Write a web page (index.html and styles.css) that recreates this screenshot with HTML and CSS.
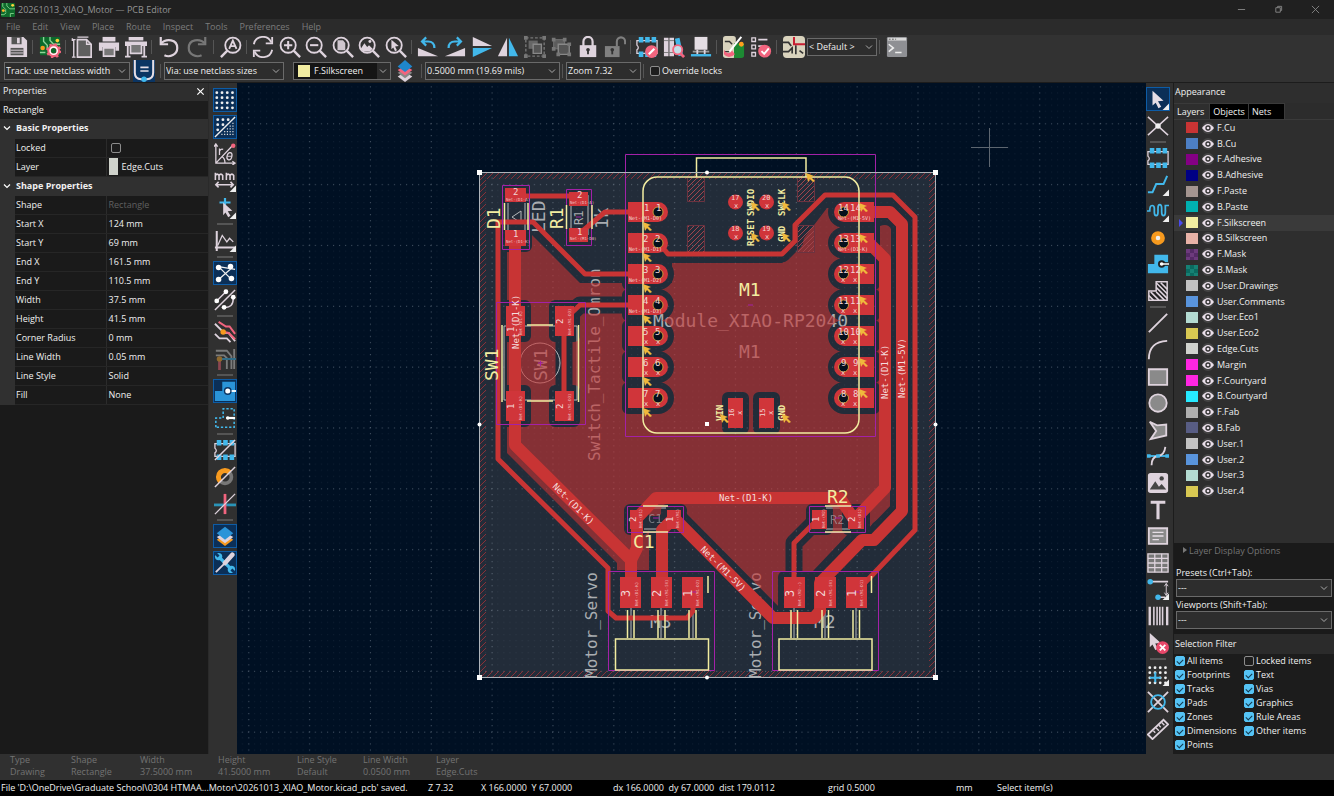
FILE: index.html
```html
<!DOCTYPE html>
<html lang="en">
<head>
<meta charset="utf-8">
<title>20261013_XIAO_Motor — PCB Editor</title>
<link rel="stylesheet" href="styles.css">
</head>
<body>
<svg class="defs" aria-hidden="true">
<defs>
<symbol id="i-logo" viewBox="0 0 24 24"><rect width="24" height="24" rx="2" fill="#0f6b2c"/><path d="M3 0v6l5 5v5M10 0v5l5 5h9M0 20h5l4-3M16 24v-6h6" fill="none" stroke="#7fd08a" stroke-width="1.6"/><circle cx="20" cy="4" r="2.5" fill="#ffd23c"/><circle cx="4" cy="13" r="2.5" fill="#ffb02c"/></symbol>
<symbol id="i-save" viewBox="0 0 24 24"><path d="M1 1h18l4 4v18H1z" fill="#ded3dd"/><path d="M6 1h11v8H6z" fill="#555"/><path d="M12 2h3v6h-3z" fill="#ded3dd"/><path d="M5 13h14v8H5z" fill="#555"/><path d="M5 15.500h14M5 18.500h14" stroke="#ded3dd"/></symbol>
<symbol id="i-setup" viewBox="0 0 24 24"><rect x="1" y="1" width="22" height="20" rx="1" fill="#0c6a2b"/><path d="M5 1v5l4 4v4M12 1v4l4 4h7M1 18h6" fill="none" stroke="#8fd49a" stroke-width="1.500"/><circle cx="20" cy="5" r="2" fill="#ffcf3c"/><circle cx="4" cy="13" r="2.500" fill="#f79a1e"/><circle cx="16" cy="16" r="5" fill="none" stroke="#f2647e" stroke-width="4"/><circle cx="16" cy="16" r="7" fill="none" stroke="#f2647e" stroke-width="2.500" stroke-dasharray="2.500 3"/><circle cx="16" cy="16" r="4" fill="none" stroke="#fff" stroke-width="1.500"/></symbol>
<symbol id="i-page" viewBox="0 0 24 24"><path d="M7 4h10l5 5v14H7z" fill="#5f5f5f" stroke="#ded3dd" stroke-width="1.800"/><path d="M17 4v5h5M7 1.200h12M3 4v19M1.500 2.500v3M1 4h4M1 23h4" fill="none" stroke="#ded3dd" stroke-width="1.500"/></symbol>
<symbol id="i-print" viewBox="0 0 24 24"><path d="M5 1h14v5H5z" fill="#ded3dd"/><path d="M1 7h22v9h-4v-4H5v4H1z" fill="#ded3dd"/><path d="M6 13h12v9H6z" fill="#777" stroke="#ded3dd" stroke-width="1.800"/></symbol>
<symbol id="i-plot" viewBox="0 0 24 24"><path d="M4 1h16v4H4zM0 6h24v5H0z" fill="#ded3dd"/><path d="M6 9h12v10H6z" fill="#777" stroke="#ded3dd" stroke-width="1.800"/><path d="M3 10v12M21 10v12M0 22.500h6M18 22.500h6" stroke="#ded3dd" stroke-width="2"/></symbol>
<symbol id="i-undo" viewBox="0 0 24 24"><path d="M3 8.500C9 2 21 3.500 21 13c0 7-8 11-14 8" fill="none" stroke="#ded3dd" stroke-width="2.400"/><path d="M3 1v8h8" fill="none" stroke="#ded3dd" stroke-width="2.400"/></symbol>
<symbol id="i-redo" viewBox="0 0 24 24"><path d="M21 8.500C15 2 3 3.500 3 13c0 7 8 11 14 8" fill="none" stroke="#777" stroke-width="2.400"/><path d="M21 1v8h-8" fill="none" stroke="#777" stroke-width="2.400"/></symbol>
<symbol id="i-lens" viewBox="0 0 24 24"><circle cx="10" cy="10" r="8.300" fill="none" stroke="#ded3dd" stroke-width="2"/><path d="m16 16 7 7" stroke="#ded3dd" stroke-width="2.600"/></symbol>
<symbol id="i-find" viewBox="0 0 24 24"><circle cx="14" cy="10" r="8.300" fill="none" stroke="#ded3dd" stroke-width="2"/><path d="m8 16-7 7" stroke="#ded3dd" stroke-width="2.600"/><path d="m10 14 4-9 4 9M11.500 11h5" fill="none" stroke="#ded3dd" stroke-width="2"/></symbol>
<symbol id="i-refresh" viewBox="0 0 24 24"><path d="M2 9a10 10 0 0 1 19-2M22 15a10 10 0 0 1-19 2" fill="none" stroke="#ded3dd" stroke-width="2"/><path d="M22 1v7h-7M2 23v-7h7" fill="none" stroke="#ded3dd" stroke-width="2"/></symbol>
<symbol id="i-zin" viewBox="0 0 24 24"><use href="#i-lens"/><path d="M5.500 10h9M10 5.500v9" stroke="#ded3dd" stroke-width="2.200"/></symbol>
<symbol id="i-zout" viewBox="0 0 24 24"><use href="#i-lens"/><path d="M5.500 10h9" stroke="#ded3dd" stroke-width="2.200"/></symbol>
<symbol id="i-zfit" viewBox="0 0 24 24"><use href="#i-lens"/><path d="M6 4.500h6l2.500 3v8H6z" fill="#cfc6ce"/></symbol>
<symbol id="i-zobj" viewBox="0 0 24 24"><use href="#i-lens"/><path d="m3 14 4-6 3 4 2-2 4 4-3 3H6z" fill="#ded3dd"/><circle cx="13" cy="6" r="1.600" fill="#ded3dd"/></symbol>
<symbol id="i-zsel" viewBox="0 0 24 24"><use href="#i-lens"/><path d="m7 4 8 7-4 .5 2 4-2 1-2-4-2 2z" fill="#ded3dd"/></symbol>
<symbol id="i-ccw" viewBox="0 0 24 24"><path d="M1 13v9h22z" fill="#ded3dd"/><path d="M6 6h6q7 0 7 7M10 1.500 5.500 6l4.500 4.500" fill="none" stroke="#42b8eb" stroke-width="2.400"/></symbol>
<symbol id="i-cw" viewBox="0 0 24 24"><path d="M23 13v9H1z" fill="#ded3dd"/><path d="M18 6h-6q-7 0-7 7M14 1.500 18.500 6 14 10.500" fill="none" stroke="#42b8eb" stroke-width="2.400"/></symbol>
<symbol id="i-flipv" viewBox="0 0 24 24"><path d="M2 1v10h21z" fill="#ded3dd"/><path d="M2 23V13h21z" fill="#42b8eb"/></symbol>
<symbol id="i-fliph" viewBox="0 0 24 24"><path d="M11 2v20H1z" fill="#ded3dd"/><path d="M13 2v20h10z" fill="#42b8eb"/></symbol>
<symbol id="i-group" viewBox="0 0 24 24"><rect x="2" y="2" width="20" height="20" fill="none" stroke="#777" stroke-width="1.500" stroke-dasharray="3 2"/><path d="M0 0h4v4H0zM20 0h4v4h-4zM0 20h4v4H0zM20 20h4v4h-4z" fill="#777"/><path d="M5 5h10v9H5z" fill="#666"/><path d="M10 9h9v10h-9z" fill="#555" stroke="#888" stroke-width="1.500"/></symbol>
<symbol id="i-ungroup" viewBox="0 0 24 24"><path d="M4 4h12v10H4z" fill="#5c5c5c" stroke="#777"/><path d="M9 9h12v11H9z" fill="#555" stroke="#888" stroke-width="1.500"/><path d="M2 2h4v4H2zM14 2h4v4h-4zM2 12h4v4H2zM19 7h4v4h-4zM7 18h4v4H7zM19 18h4v4h-4z" fill="#777"/></symbol>
<symbol id="i-lock" viewBox="0 0 24 24"><path d="M3 10h18v13H3z" fill="#ded3dd"/><path d="M7 11V6a5 5 0 0 1 10 0v5" fill="none" stroke="#ded3dd" stroke-width="2.400"/><circle cx="12" cy="15" r="2" fill="#333"/><path d="M12 15v5" stroke="#333" stroke-width="2"/></symbol>
<symbol id="i-unlock" viewBox="0 0 24 24"><path d="M1 11h16v12H1z" fill="#808080"/><path d="M14 11V6a4.500 4.500 0 0 1 9 0v3" fill="none" stroke="#808080" stroke-width="2.200"/><circle cx="9" cy="15" r="2" fill="#333"/><path d="M9 15v5" stroke="#333" stroke-width="2"/></symbol>
<symbol id="i-fp" viewBox="0 0 24 24"><path d="M1 5h22v14H1v-4q3-2 0-5z" fill="none" stroke="#ded3dd" stroke-width="1.400"/><path d="M3 1h5v6H3zM10 1h5v6h-5zM17 1h5v6h-5zM3 17h5v6H3zM10 17h5v6h-5zM17 17h5v6h-5z" fill="#42b8eb"/></symbol>
<symbol id="i-fpedit" viewBox="0 0 24 24"><use href="#i-fp"/><circle cx="17" cy="17" r="7" fill="#f2647e"/><path d="m14 20 6-6" stroke="#fff" stroke-width="2.400"/></symbol>
<symbol id="i-lib" viewBox="0 0 24 24"><path d="M1 2h5v20H1zM7 2h5v20H7z" fill="#ded3dd"/><path d="M1 5h11M1 18h11" stroke="#777"/><path d="m13 3 5-1 4 19-5 1z" fill="#42b8eb"/><circle cx="16" cy="15" r="5" fill="#c5dfe8" stroke="#f2647e" stroke-width="2"/><path d="m19 19 4 4" stroke="#f2647e" stroke-width="3"/></symbol>
<symbol id="i-update" viewBox="0 0 24 24"><path d="M5 1h14v14H5z" fill="#e4dde3"/><path d="M3 16h18v2H3z" fill="#999"/><path d="M8 15v5M16 15v5" stroke="#ded3dd" stroke-width="2"/><path d="M1 21h22" stroke="#42b8eb" stroke-width="2.600"/></symbol>
<symbol id="i-sch" viewBox="0 0 24 24"><rect width="14" height="24" rx="3" fill="#d9d3bd"/><path d="M12 8h11v13a3 3 0 0 1-3 3h-8z" fill="#1d8a33"/><path d="M2 6h5l3 3M2 17h5" stroke="#333" fill="none" stroke-width="1.500"/><circle cx="20" cy="9" r="2.600" fill="#ff9d1e"/><path d="M20 1 7 17" stroke="#fff" stroke-width="2.200"/><path d="M1 15q4 7 9 1l3 4q-7 6-12 0z" fill="#f2647e"/></symbol>
<symbol id="i-drc" viewBox="0 0 24 24"><path d="M2 2h4v4H2zM2 10h4v4H2zM2 18h4v4H2z" fill="none" stroke="#ded3dd" stroke-width="1.400"/><path d="M9 4h10M9 11h6" stroke="#ded3dd" stroke-width="2"/><circle cx="16" cy="16.500" r="7" fill="#f2647e"/><path d="m12.500 16.500 3 3 5-6" fill="none" stroke="#fff" stroke-width="2"/></symbol>
<symbol id="i-eesch" viewBox="0 0 24 24"><rect width="24" height="24" rx="4" fill="#d9d3bd"/><path d="M0 7h6l3 4M0 17h6l4-4v6M10 12v4M18 16l4 3M14 10v10" fill="none" stroke="#333" stroke-width="1.800"/><path d="M12 1v8h12" fill="none" stroke="#c81e32" stroke-width="2.200"/></symbol>
<symbol id="i-term" viewBox="0 0 24 24"><rect x="1" y="1" width="22" height="22" rx="1.500" fill="#8f9094"/><path d="M2 2h20v3H2z" fill="#d8d8d8"/><path d="M3 3.500h8" stroke="#555" stroke-dasharray="2 1.500"/><path d="m3 9 5 4-5 4M10 18h7" fill="none" stroke="#eee" stroke-width="1.700"/></symbol>
<symbol id="i-track" viewBox="0 0 24 24"><path d="M0 0h24v24H0z" fill="#0b3563"/><path d="M2 0v14q0 7 7 7h6q7 0 7-7V0" fill="none" stroke="#e6dee6" stroke-width="2.200"/><path d="M8 8h9M8 12h9" stroke="#e6dee6" stroke-width="1.800"/><circle cx="12" cy="21" r="3" fill="#42b8eb"/></symbol>
<symbol id="i-layers" viewBox="0 0 24 24"><path d="m12 13 8 5-8 6-8-6z" fill="#ded3dd"/><path d="m12 10 8 4-8 6-8-6z" fill="#888"/><path d="m12 6 8 5-8 6-8-6z" fill="#f2647e"/><path d="m12 0 8 7-8 6-8-6z" fill="#1f86cc"/></symbol>
<symbol id="c-corner" viewBox="0 0 24 24"><path d="M24 17v7h-7z" fill="#eee"/></symbol>
<symbol id="i-grid" viewBox="0 0 24 24"><path d="M3 4h20M3 9.500h20M3 15h20M3 20.500h20" stroke="#eee" stroke-width="3" stroke-dasharray="0.100 5.600" stroke-linecap="round"/></symbol>
<symbol id="i-grid2" viewBox="0 0 24 24"><path d="M4 4h14M4 9.500h8M4 15h3" stroke="#eee" stroke-width="3" stroke-dasharray="0.100 5.600" stroke-linecap="round"/><path d="M1 23 23 1" stroke="#eee" stroke-width="1.500"/><path d="M20 8h3M17 11h6M14 14h9M11 17h12M8 20h15" stroke="#ddd" stroke-width="1.300" stroke-dasharray="1.300 1.700"/></symbol>
<symbol id="i-polar" viewBox="0 0 24 24"><path d="M2 1v21h21M2 22 20 3M0 4l2-3 2 3M20 20l3 2-3 2M12 22q0-5-3-7" fill="none" stroke="#ded3dd" stroke-width="1.400"/><circle cx="21" cy="3" r="2.400" fill="#f2647e"/><path d="M6 13V6m0 3q1-3 4-2" fill="none" stroke="#ded3dd" stroke-width="1.400"/><ellipse cx="17" cy="14.500" rx="2.600" ry="4" transform="rotate(15 17 14)" fill="none" stroke="#ded3dd" stroke-width="1.400"/><path d="M14.500 14.500h5" stroke="#ded3dd"/></symbol>
<symbol id="i-mm" viewBox="0 0 24 24"><path d="M1.500 11V3m0 3q2-3 4 0v5m0-5q2-3 4 0v5M13.500 11V3m0 3q2-3 4 0v5m0-5q2-3 4 0v5" fill="none" stroke="#ded3dd" stroke-width="1.700"/><path d="M2 16h19M5 13l-3 3 3 3M18 13l3 3-3 3" fill="none" stroke="#ded3dd" stroke-width="1.700"/><use href="#c-corner"/></symbol>
<symbol id="i-cursor" viewBox="0 0 24 24"><path d="M12 1v10M6 6h12" stroke="#42b8eb" stroke-width="2.400"/><path d="m10 6 10 9-5 .5 3 5-2.500 1.500-3-5-2.500 3z" fill="#ded3dd"/><use href="#c-corner"/></symbol>
<symbol id="i-axes" viewBox="0 0 24 24"><path d="M3 1v22M1 19h22" fill="none" stroke="#ded3dd" stroke-width="2.200"/><path d="m4 17 5-11 5 7 3-4 4 4" fill="none" stroke="#ded3dd" stroke-width="1.400"/><use href="#c-corner"/></symbol>
<symbol id="i-rats" viewBox="0 0 24 24"><path d="m5 5 14 14M5 19 20 6M5 5l18 3" stroke="#eee" stroke-width="1.400"/><g fill="#fff"><circle cx="5" cy="6" r="3"/><circle cx="18" cy="5" r="3"/><circle cx="5" cy="19" r="3"/><circle cx="19" cy="18" r="3"/></g></symbol>
<symbol id="i-rats2" viewBox="0 0 24 24"><path d="m2 14 11-11M1 23 23 1M11 20q10 1 10-10" fill="none" stroke="#ded3dd" stroke-width="1.600"/><g fill="#fff"><circle cx="3" cy="13" r="2.600"/><circle cx="13" cy="3" r="2.600"/><circle cx="11" cy="20" r="2.600"/><circle cx="21" cy="9" r="2.600"/></g></symbol>
<symbol id="i-diff" viewBox="0 0 24 24"><path d="m1 3 10 10h5l7 9M1 14l5 5h8l4 4" fill="none" stroke="#ded3dd" stroke-width="2"/><path d="m5 1 8 5h4l6 8M11 12l5 1 7 7" fill="none" stroke="#f2647e" stroke-width="2.200"/><circle cx="10" cy="12" r="3" fill="#f79a1e"/></symbol>
<symbol id="i-dim" viewBox="0 0 24 24"><path d="M2 3h12l5 6v14M2 8h9l3 3v12M22 1v22" fill="none" stroke="#7b7b7b" stroke-width="2"/><path d="M6 12v12" stroke="#8c4650" stroke-width="3"/><path d="M6 12h18" stroke="#316d88" stroke-width="2.200"/><circle cx="6" cy="12" r="3" fill="#8f6a2f"/></symbol>
<symbol id="i-zone" viewBox="0 0 24 24"><path d="M1 23V12h8V2h14v21z" fill="#2a94d8"/><path d="M14 12h10" stroke="#fff" stroke-width="2"/><circle cx="15" cy="12" r="3.500" fill="#fff" stroke="#0b3563" stroke-width="1.500"/></symbol>
<symbol id="i-zone2" viewBox="0 0 24 24"><path d="M2 22V12h8V2h12v20z" fill="none" stroke="#42b8eb" stroke-width="1.700" stroke-dasharray="2.500 2"/><path d="M14 12h9" stroke="#fff" stroke-width="2.400"/><circle cx="15" cy="12" r="2" fill="#fff"/></symbol>
<symbol id="i-fpo" viewBox="0 0 24 24"><use href="#i-fp"/><path d="M1 23 23 1" stroke="#ded3dd" stroke-width="1.600"/></symbol>
<symbol id="i-via" viewBox="0 0 24 24"><circle cx="12" cy="12" r="7" fill="none" stroke="#777" stroke-width="4"/><path d="M5 19A9.500 9.500 0 1 1 19 5l-4 4a4 4 0 0 0-6 6z" fill="#f79a1e"/><path d="M1 23 23 1" stroke="#ded3dd" stroke-width="1.600"/></symbol>
<symbol id="i-trk" viewBox="0 0 24 24"><path d="M0 13h24" stroke="#2a94b8" stroke-width="3"/><path d="M12 1v22" stroke="#f2647e" stroke-width="3"/><path d="M1 23 23 1" stroke="#ded3dd" stroke-width="1.400"/></symbol>
<symbol id="i-stack" viewBox="0 0 24 24"><path d="m12 10 9 6-9 7-9-7z" fill="#f79a1e"/><path d="m12 8 9 5-9 7-9-7z" fill="#ded3dd"/><path d="m12 2 9 7-9 7-9-7z" fill="#2a94d8"/></symbol>
<symbol id="i-tools" viewBox="0 0 24 24"><path d="m5 5 14 14" stroke="#42b8eb" stroke-width="3.500"/><circle cx="5" cy="5" r="4" fill="#42b8eb"/><circle cx="19" cy="19" r="4" fill="#42b8eb"/><path d="m0 0 5 5M24 24l-5-5" stroke="#0b3563" stroke-width="3"/><path d="M2 22 13 11" stroke="#ded3dd" stroke-width="2"/><path d="m12 12 8-9" stroke="#ded3dd" stroke-width="5" stroke-linecap="round"/></symbol>
<symbol id="i-arrow" viewBox="0 0 24 24"><path d="m6 3 12 11-6 .5 3.500 6-3 1.500-3-6L6 19z" fill="#e6dee6"/><use href="#c-corner"/></symbol>
<symbol id="i-netx" viewBox="0 0 24 24"><path d="m1 2 22 20M1 22 23 2" stroke="#ded3dd" stroke-width="1.600"/><circle cx="12" cy="12" r="3" fill="#eee"/></symbol>
<symbol id="i-route" viewBox="0 0 24 24"><path d="M1 20h5l4-9h8l4-9" fill="none" stroke="#42b8eb" stroke-width="2.200"/><use href="#c-corner"/></symbol>
<symbol id="i-tune" viewBox="0 0 24 24"><path d="M0 12h3q0-6 2.500-6T8 9v4q0 4 2 4t2-4V9q0-4 2-4t2 4v4q0 4 2 4t2-4V6h4" fill="none" stroke="#42b8eb" stroke-width="1.900"/><use href="#c-corner"/></symbol>
<symbol id="i-viaadd" viewBox="0 0 24 24"><circle cx="12" cy="12" r="5" fill="#eee" stroke="#f79a1e" stroke-width="5"/></symbol>
<symbol id="i-zoneadd" viewBox="0 0 24 24"><path d="M1 22V12h7V2h15v20z" fill="#42b8eb"/><path d="M15 12h8" stroke="#222" stroke-width="4"/><circle cx="16" cy="12" r="4" fill="#222"/><path d="M15 12h9" stroke="#fff" stroke-width="1.600"/><circle cx="16" cy="12" r="2" fill="#fff"/></symbol>
<symbol id="i-rule" viewBox="0 0 24 24"><path d="M2 22V12h8V2h12v20z" fill="#222" stroke="#ded3dd" stroke-width="1.600"/><path d="m10 3 12 12M10 8l12 12M10 13l9 9M4 13l9 9M2 17l5 5M15 3l7 7" stroke="#ded3dd" stroke-width="1.700"/></symbol>
<symbol id="i-line" viewBox="0 0 24 24"><path d="M2 22 22 2" stroke="#ded3dd" stroke-width="2"/></symbol>
<symbol id="i-arc" viewBox="0 0 24 24"><path d="M2 22Q2 3 22 2" fill="none" stroke="#ded3dd" stroke-width="2"/></symbol>
<symbol id="i-rect" viewBox="0 0 24 24"><path d="M2 3.500h20v17H2z" fill="#8a8a8a" stroke="#ded3dd" stroke-width="2"/></symbol>
<symbol id="i-circ" viewBox="0 0 24 24"><circle cx="12" cy="12" r="9.500" fill="#8a8a8a" stroke="#ded3dd" stroke-width="2"/></symbol>
<symbol id="i-poly" viewBox="0 0 24 24"><path d="m3 3 8 4 10-1v12L4 22l6-9z" fill="#8a8a8a" stroke="#ded3dd" stroke-width="2"/></symbol>
<symbol id="i-bez" viewBox="0 0 24 24"><path d="M1 12h22" stroke="#42b8eb" stroke-width="2"/><path d="M5 22q0-9 7-10t8-10" fill="none" stroke="#ded3dd" stroke-width="2"/><path d="M0 10h4v4H0zM10 10h4v4h-4zM20 10h4v4h-4z" fill="#42b8eb"/></symbol>
<symbol id="i-img" viewBox="0 0 24 24"><rect x="1" y="1" width="22" height="22" rx="3" fill="#ded3dd"/><path d="m3 19 6-9 4 6 3-3 5 6z" fill="#444"/><circle cx="16" cy="7" r="2.400" fill="#444"/></symbol>
<symbol id="i-text" viewBox="0 0 24 24"><path d="M4 3.500h16M12 3v19" stroke="#ded3dd" stroke-width="3.400"/></symbol>
<symbol id="i-tbox" viewBox="0 0 24 24"><path d="M2 3.500h20v17H2z" fill="#8a8a8a" stroke="#ded3dd" stroke-width="2"/><path d="M6 8h12M6 12h12M6 16h7" stroke="#e6dee6" stroke-width="1.500"/></symbol>
<symbol id="i-table" viewBox="0 0 24 24"><path d="M1 2h22v20H1z" fill="#777" stroke="#ded3dd" stroke-width="1.500"/><path d="M1 7h22M1 12h22M1 17h22M8.500 2v20M16 2v20" stroke="#ded3dd" stroke-width="1.400"/></symbol>
<symbol id="i-dima" viewBox="0 0 24 24"><path d="M3 4h20M12 21h8" stroke="#ded3dd" stroke-width="1.800"/><path d="M21 6v13M19 9l2-3 2 3M19 16l2 3 2-3" fill="none" stroke="#ded3dd"/><circle cx="3.500" cy="4" r="3" fill="#42b8eb"/><circle cx="12" cy="21" r="3" fill="#42b8eb"/><use href="#c-corner"/></symbol>
<symbol id="i-bar" viewBox="0 0 24 24"><path d="M3 2v20M22 2v20" stroke="#ded3dd" stroke-width="2.600"/><path d="M7.500 2v20M11 2v20M17 2v20M14 2v20" stroke="#ded3dd" stroke-width="1.700"/></symbol>
<symbol id="i-del" viewBox="0 0 24 24"><path d="m3 1 12 11-6 .5 3 6-3 1-3-6-3 3z" fill="#ded3dd"/><circle cx="17" cy="17" r="7" fill="#e8486a"/><path d="m14 14 6 6M14 20l6-6" stroke="#fff" stroke-width="2"/></symbol>
<symbol id="i-gorig" viewBox="0 0 24 24"><use href="#i-grid"/><path d="M9 9v11M3 15h12" stroke="#42b8eb" stroke-width="2.200"/><use href="#c-corner"/></symbol>
<symbol id="i-snap" viewBox="0 0 24 24"><path d="m1 1 22 22M1 23 23 1" stroke="#ded3dd" stroke-width="2"/><circle cx="12" cy="12" r="7.500" fill="none" stroke="#42b8eb" stroke-width="2"/></symbol>
<symbol id="i-ruler" viewBox="0 0 24 24"><path d="m1 18 17-16 5 5L6 23z" fill="none" stroke="#ded3dd" stroke-width="2"/><path d="m7 14 2 2M10 11l3 3M13 8l2 2M16 5l3 3" stroke="#ded3dd" stroke-width="1.500"/></symbol>
<symbol id="i-eye" viewBox="0 0 20 18"><circle cx="10" cy="9" r="9" fill="#434343"/><path d="M1 9Q10-3 19 9 10 21 1 9z" fill="#eadfea"/><circle cx="10" cy="9" r="4" fill="#333"/><circle cx="10" cy="9" r="2" fill="#eadfea"/></symbol>
<symbol id="i-down" viewBox="0 0 10 10"><path d="m2 3.500 3 3 3-3" fill="none" stroke="#aaa"/></symbol>
</defs>
</svg>

<div class="app">
<header class="titlebar"><svg class="logo"><use href="#i-logo"/></svg><h1>20261013_XIAO_Motor — PCB Editor</h1>
<div class="winctl"><button aria-label="Minimize"><svg viewBox="0 0 10 10"><path d="M1 5h8"/></svg></button><button aria-label="Restore"><svg viewBox="0 0 10 10"><path d="M2 3h5v5H2zM4 3V1.500h4.500V6H7"/></svg></button><button aria-label="Close"><svg viewBox="0 0 10 10"><path d="m1 1 8 8M1 9l8-8"/></svg></button></div></header>
<nav class="menubar"><button>File</button><button>Edit</button><button>View</button><button>Place</button><button>Route</button><button>Inspect</button><button>Tools</button><button>Preferences</button><button>Help</button></nav>

<div class="toolbar">
<div class="tg n1"><button aria-label="Save"><svg><use href="#i-save"/></svg></button></div><i class="sep"></i>
<div class="tg n1"><button aria-label="Board setup"><svg><use href="#i-setup"/></svg></button></div><i class="sep"></i>
<div class="tg n3"><button aria-label="Page settings"><svg><use href="#i-page"/></svg></button><button aria-label="Print"><svg><use href="#i-print"/></svg></button><button aria-label="Plot"><svg><use href="#i-plot"/></svg></button></div><i class="sep"></i>
<div class="tg undo"><button aria-label="Undo"><svg><use href="#i-undo"/></svg></button><button aria-label="Redo"><svg><use href="#i-redo"/></svg></button></div><i class="sep"></i>
<div class="tg n1"><button aria-label="Find"><svg><use href="#i-find"/></svg></button></div><i class="sep"></i>
<div class="tg n6"><button aria-label="Refresh"><svg><use href="#i-refresh"/></svg></button><button aria-label="Zoom in"><svg><use href="#i-zin"/></svg></button><button aria-label="Zoom out"><svg><use href="#i-zout"/></svg></button><button aria-label="Zoom to fit"><svg><use href="#i-zfit"/></svg></button><button aria-label="Zoom to objects"><svg><use href="#i-zobj"/></svg></button><button aria-label="Zoom to selection"><svg><use href="#i-zsel"/></svg></button></div><i class="sep"></i>
<div class="tg n8"><button aria-label="Rotate left"><svg><use href="#i-ccw"/></svg></button><button aria-label="Rotate right"><svg><use href="#i-cw"/></svg></button><button aria-label="Flip vertical"><svg><use href="#i-flipv"/></svg></button><button aria-label="Flip horizontal"><svg><use href="#i-fliph"/></svg></button><button aria-label="Group"><svg><use href="#i-group"/></svg></button><button aria-label="Ungroup"><svg><use href="#i-ungroup"/></svg></button><button aria-label="Lock"><svg><use href="#i-lock"/></svg></button><button aria-label="Unlock"><svg><use href="#i-unlock"/></svg></button></div><i class="sep"></i>
<div class="tg n3"><button aria-label="Footprint editor"><svg><use href="#i-fpedit"/></svg></button><button aria-label="Footprint library"><svg><use href="#i-lib"/></svg></button><button aria-label="Update footprints"><svg><use href="#i-update"/></svg></button></div><i class="sep"></i>
<div class="tg n2"><button aria-label="Update from schematic"><svg><use href="#i-sch"/></svg></button><button aria-label="Design rules check"><svg><use href="#i-drc"/></svg></button></div><i class="sep"></i>
<div class="tg n1"><button aria-label="Schematic editor"><svg><use href="#i-eesch"/></svg></button></div>
<div class="combo w-default"><select aria-label="Variant"><option>&lt; Default &gt;</option></select><svg><use href="#i-down"/></svg></div><i class="sep"></i>
<div class="tg n1"><button aria-label="Scripting console"><svg><use href="#i-term"/></svg></button></div>
</div>

<div class="toolbar second">
<div class="combo w-track"><select aria-label="Track width"><option>Track: use netclass width</option></select><svg><use href="#i-down"/></svg></div>
<button class="solo" aria-label="Auto track width"><svg><use href="#i-track"/></svg></button><i class="sep"></i>
<div class="combo w-via"><select aria-label="Via size"><option>Via: use netclass sizes</option></select><svg><use href="#i-down"/></svg></div>
<div class="combo w-layer"><i class="sw silk"></i><select aria-label="Layer"><option>F.Silkscreen</option></select><svg><use href="#i-down"/></svg></div>
<button class="solo" aria-label="Layer pair"><svg><use href="#i-layers"/></svg></button><i class="sep"></i>
<div class="combo w-grid"><select aria-label="Grid"><option>0.5000 mm (19.69 mils)</option></select><svg><use href="#i-down"/></svg></div><i class="sep"></i>
<div class="combo w-zoom"><select aria-label="Zoom"><option>Zoom 7.32</option></select><svg><use href="#i-down"/></svg></div><i class="sep"></i>
<label class="check"><input type="checkbox">Override locks</label>
</div>

<main class="main">
<aside class="props">
<header class="phead"><h2>Properties</h2><button aria-label="Close properties"><svg viewBox="0 0 10 10"><path d="m1.500 1.500 7 7M1.500 8.500l7-7"/></svg></button></header>
<p class="ptype">Rectangle</p>
<table class="ptable">
<colgroup><col class="k0"><col class="k1"><col></colgroup>
<tbody>
<tr class="sect"><td><svg viewBox="0 0 10 10"><path d="m2 3.500 3 3 3-3"/></svg></td><th colspan="2">Basic Properties</th></tr>
<tr><td></td><th><label for="lk">Locked</label></th><td><input id="lk" type="checkbox"></td></tr>
<tr><td></td><th>Layer</th><td><span class="lay"><i class="sw edge"></i>Edge.Cuts</span></td></tr>
<tr class="sect"><td><svg viewBox="0 0 10 10"><path d="m2 3.500 3 3 3-3"/></svg></td><th colspan="2">Shape Properties</th></tr>
<tr><td></td><th>Shape</th><td class="dim">Rectangle</td></tr>
<tr><td></td><th>Start X</th><td>124 mm</td></tr>
<tr><td></td><th>Start Y</th><td>69 mm</td></tr>
<tr><td></td><th>End X</th><td>161.5 mm</td></tr>
<tr><td></td><th>End Y</th><td>110.5 mm</td></tr>
<tr><td></td><th>Width</th><td>37.5 mm</td></tr>
<tr><td></td><th>Height</th><td>41.5 mm</td></tr>
<tr><td></td><th>Corner Radius</th><td>0 mm</td></tr>
<tr><td></td><th>Line Width</th><td>0.05 mm</td></tr>
<tr><td></td><th>Line Style</th><td>Solid</td></tr>
<tr><td></td><th>Fill</th><td>None</td></tr>
</tbody>
</table>
</aside>

<div class="vbar left">
<div class="vg v5"><button class="on" aria-label="Grid"><svg><use href="#i-grid"/></svg></button><button class="on" aria-label="Grid overrides"><svg><use href="#i-grid2"/></svg></button><button aria-label="Polar"><svg><use href="#i-polar"/></svg></button><button aria-label="Units"><svg><use href="#i-mm"/></svg></button><button aria-label="Cursor"><svg><use href="#i-cursor"/></svg></button></div><i></i>
<div class="vg v1"><button aria-label="Axes"><svg><use href="#i-axes"/></svg></button></div><i></i>
<div class="vg v2"><button class="on" aria-label="Ratsnest"><svg><use href="#i-rats"/></svg></button><button aria-label="Curved ratsnest"><svg><use href="#i-rats2"/></svg></button></div><i></i>
<div class="vg v2"><button aria-label="Differential pairs"><svg><use href="#i-diff"/></svg></button><button aria-label="Net highlight"><svg><use href="#i-dim"/></svg></button></div><i></i>
<div class="vg v2"><button class="on" aria-label="Zone fills"><svg><use href="#i-zone"/></svg></button><button aria-label="Zone outlines"><svg><use href="#i-zone2"/></svg></button></div><i></i>
<div class="vg v3"><button aria-label="Sketch pads"><svg><use href="#i-fpo"/></svg></button><button aria-label="Sketch vias"><svg><use href="#i-via"/></svg></button><button aria-label="Sketch tracks"><svg><use href="#i-trk"/></svg></button></div><i></i>
<div class="vg v2"><button class="on" aria-label="Appearance"><svg><use href="#i-stack"/></svg></button><button class="on" aria-label="Properties"><svg><use href="#i-tools"/></svg></button></div>
</div>

<section class="canvas">
<svg viewBox="237 83 909 671" preserveAspectRatio="xMidYMid slice" role="img" aria-label="Board layout">
<defs>
<pattern id="dots" x="491.200" y="183.700" width="6.084" height="6.084" patternUnits="userSpaceOnUse"><path d="M0 0h1v1H0z" fill="#9fb0c4" opacity=".09"/></pattern>
<pattern id="rowdots" x="491.200" y="184.200" width="6.084" height="60.840" patternUnits="userSpaceOnUse"><path d="M0 0h1v1H0z" fill="#b4c0cc" opacity=".33"/></pattern>
<pattern id="coldots" x="491.700" y="183.700" width="60.840" height="6.084" patternUnits="userSpaceOnUse"><path d="M0 0h1v1H0z" fill="#b4c0cc" opacity=".33"/></pattern>
<pattern id="hatch" width="6" height="6" patternUnits="userSpaceOnUse"><path d="M-1 7 7-1M-1 1l2-2M5 7l2-2" stroke="#8a3038" stroke-width="1"/></pattern>
<pattern id="hatch2" width="5" height="5" patternUnits="userSpaceOnUse"><path d="M-1 6 6-1M-1 1l2-2M4 6l2-2" stroke="#a0444c" stroke-width="1"/></pattern>
<g id="thin"><path d="M693 600v11l-6 7h-71l-8-7v-43L498 459V222h35l52 52h60"/><path d="M515 196h64M579 234l26-22h40M564 400V320l16-15h65M655 243h4l9 11h114l13-13v-16l30-30h68l22 22v313l-55 58M820 517l-26 26v45"/></g>
<g id="power"><path d="M858 212h32l12 12v287l-28 29h-12l-42 43v28l-6 7h-41L674 518l-12 12v60"/></g>
<g id="own"><path d="M515 240v205l116 115v32M631 560l6-12v-30l19-20h184l13 20M856 518l29-30V259l-17-17h-20"/></g>
<g id="pl"><path d="M628 202h30a10 10 0 0 1 0 20h-30z"/></g>
<g id="pr"><path d="M874 202h-30a10 10 0 0 0 0 20h30z"/></g>
<g id="pads">
<use href="#pl"/><use href="#pl" y="31"/><use href="#pl" y="62"/><use href="#pl" y="93"/><use href="#pl" y="124"/><use href="#pl" y="155"/><use href="#pl" y="186"/>
<use href="#pr"/><use href="#pr" y="31"/><use href="#pr" y="62"/><use href="#pr" y="93"/><use href="#pr" y="124"/><use href="#pr" y="155"/><use href="#pr" y="186"/>
<path d="M505 188h21v14h-21zM505 230h21v16h-21zM569 192h19v14h-19zM569 228h19v14h-19zM506 306h19v30h-19zM506 391h19v30h-19zM555 306h19v30h-19zM555 391h19v30h-19zM728 398h15v30h-15zM759 398h15v30h-15z"/>
<path d="M630 510h13v19h-13zM667 510h14v19h-14zM812 510h15v19h-15zM848 510h16v19h-16z"/></g>
<g id="mpads"><path d="M620 577h21v31h-21zM651 577h21v31h-21zM682 577h21v31h-21zM784 577h21v31h-21zM815 577h21v31h-21zM846 577h21v31h-21z"/></g>
<g id="hole"><circle cx="658" cy="212" r="5" fill="#06101c" stroke="#c79a3c"/></g>
<g id="arr"><path d="m643 222 8 3-3 1 4 4-2 1-3-3-2 3z" fill="#f0b83c"/></g>
<mask id="zm" maskUnits="userSpaceOnUse" x="470" y="160" width="470" height="520"><path fill="#fff" d="M507 252l4-6 21-11 48 48h92v-20h110l13-13 32-42h13v54h51v248l-18 13-8 12h-18l-34 36h-26l-9 7v37L677 516h-28v54h-32v-7L507 453z"/>
<g fill="none" stroke="#000" stroke-linejoin="round"><use href="#thin" stroke-width="17"/><use href="#power" stroke-width="24"/><use href="#pads" fill="#000" stroke-width="12"/><use href="#mpads" fill="#000" stroke-width="12"/></g>
<path fill="#fff" d="M880 226q8-3 11 3v30l-11-8z"/></mask>
</defs>
<rect class="bg" x="-800" y="-800" width="3000" height="2600"/>
<rect class="board" x="479.500" y="172.500" width="456" height="505"/>
<rect x="-800" y="-800" width="3000" height="2600" fill="url(#dots)"/><rect x="-800" y="-800" width="3000" height="2600" fill="url(#rowdots)"/><rect x="-800" y="-800" width="3000" height="2600" fill="url(#coldots)"/>
<path d="M483 176h449v498H483z" fill="none" stroke="url(#hatch)" stroke-width="6"/>
<g class="fab"><text class="t16" transform="translate(600 461) rotate(-90)">Switch_Tactile_Omron</text><text class="t18" x="653" y="327">Module_XIAO-RP2040</text><text class="t18" x="739" y="358">M1</text><text class="t16" transform="translate(597 678) rotate(-90)">Motor_Servo</text><text class="t16" transform="translate(761 678) rotate(-90)">Motor_Servo</text><text class="t18" x="650" y="628">M3</text><text class="t18" x="814" y="628">M2</text><text class="t18" transform="translate(545 233) rotate(-90)">LED</text><text class="t18" transform="translate(608 229) rotate(-90)">1k</text><text class="t18" transform="translate(547 381) rotate(-90)">SW1</text>
<g class="fabl"><circle cx="540" cy="363" r="20"/><path d="M504 326h73v74h-73zM508 203v27M525 203v27M571 206v22M588 195v40M644 508h22M644 529h22M826 508h24M826 529h24M631 608v30M661 608v30M693 608v30M794 608v30M825 608v30M856 608v30M521 211v12l-9-6z"/></g></g>
<rect class="zone" x="480" y="172" width="456" height="505" mask="url(#zm)"/>
<g class="hb"><path d="M687.500 177.500h17v24h-17zM687.500 225.500h17v27h-17zM797.500 177.500h17v24h-17zM797.500 225.500h17v27h-17z"/></g>
<g class="cu"><use href="#thin" stroke-width="5"/><use href="#power" stroke-width="12"/><use href="#own" stroke-width="12"/></g>
<g class="pad"><use href="#pads"/><use href="#mpads"/><circle cx="735.500" cy="202" r="7.500"/><circle cx="766.500" cy="202" r="7.500"/><circle cx="735.500" cy="233" r="7.500"/><circle cx="766.500" cy="233" r="7.500"/></g>
<g class="fab"><text class="t12" transform="translate(583 225) rotate(-90)">R1</text><text class="t12 soft" x="648" y="523">C1</text><text class="t12 soft" x="830" y="524">R2</text></g>
<g><use href="#hole"/><use href="#hole" y="31"/><use href="#hole" y="62"/><use href="#hole" y="93"/><use href="#hole" y="124"/><use href="#hole" y="155"/><use href="#hole" y="186"/><use href="#hole" x="185.500"/><use href="#hole" x="185.500" y="31"/><use href="#hole" x="185.500" y="62"/><use href="#hole" x="185.500" y="93"/><use href="#hole" x="185.500" y="124"/><use href="#hole" x="185.500" y="155"/><use href="#hole" x="185.500" y="186"/></g>
<g class="court"><path d="M502.500 185.500h27v64h-27zM566.500 189.500h25v56h-25zM496.500 302.500h89v122h-89zM625.500 154.500h250v282h-250zM627.500 506.500h56v26h-56zM809.500 506.500h56v26h-56zM608.500 571.500h106v99h-106zM772.500 571.500h106v99h-106zM538 363h5M540.500 361v5M748 305h5M576 217h5M653 518h6M835 518h6M691 592h5M854 592h5"/></g>
<g class="silk"><rect x="643" y="177" width="216" height="256" rx="14"/><path d="M696.500 177v-19H806v19M504.500 203v27M528 203v27M566.500 205v24M592 205v24M502 325v77M578.500 325v77M527 325h26M527 401h26M643 506h25M643 532h25M825 506h26M825 532h26M615.500 639h93v31h-93zM779 639h93v31h-93zM708 576v17M871.500 576v17M627.500 610v28M634 610v28M658 610v28M665 610v28M689 610v28M696 610v28M791 610v28M797.500 610v28M822 610v28M828.500 610v28M853 610v28M859.500 610v28"/></g>
<g class="silkt"><text class="t18" transform="translate(500 229) rotate(-90)">D1</text><text class="t18" transform="translate(563 229) rotate(-90)">R1</text><text class="t18" transform="translate(498 381) rotate(-90)">SW1</text><text class="t18" x="739" y="296">M1</text><text class="t18" x="633" y="548">C1</text><text class="t18" x="827" y="503">R2</text>
<g class="sb"><text transform="translate(754 216) rotate(-90)">SWDIO</text><text transform="translate(754 246) rotate(-90)">RESET</text><text transform="translate(785 216) rotate(-90)">SWCLK</text><text transform="translate(785 242) rotate(-90)">GND</text><text transform="translate(723 421) rotate(-90)">VIN</text><text transform="translate(785 421) rotate(-90)">GND</text></g></g>
<g><use href="#arr"/><use href="#arr" y="31"/><use href="#arr" y="62"/><use href="#arr" y="93"/><use href="#arr" y="124"/><use href="#arr" y="155"/><use href="#arr" y="186"/><use href="#arr" x="216" y="-19"/><use href="#arr" x="216" y="12"/><use href="#arr" x="216" y="43"/><use href="#arr" x="216" y="74"/><use href="#arr" x="216" y="105"/><use href="#arr" x="216" y="136"/><use href="#arr" x="216" y="167"/><use href="#arr" x="163" y="-49"/><use href="#arr" x="108" y="-20"/><use href="#arr" x="139" y="-20"/><use href="#arr" x="108" y="11"/><use href="#arr" x="139" y="11"/><use href="#arr" x="77" y="192"/><use href="#arr" x="139" y="192"/></g>
<g class="num"><text x="644" y="211">1</text><text x="656" y="211">1</text><text x="643" y="242">2</text><text x="655" y="242">2</text><text x="643" y="273">3</text><text x="655" y="273">3</text><text x="643" y="304">4</text><text x="655" y="304">4</text><text x="643" y="335">5</text><text x="655" y="335">5</text><text x="643" y="366">6</text><text x="655" y="366">6</text><text x="643" y="397">7</text><text x="655" y="397">7</text>
<text x="838" y="211">14</text><text x="850" y="211">14</text><text x="838" y="242">13</text><text x="850" y="242">13</text><text x="838" y="273">12</text><text x="850" y="273">12</text><text x="838" y="304">11</text><text x="850" y="304">11</text><text x="838" y="335">10</text><text x="850" y="335">10</text><text x="841" y="366">9</text><text x="853" y="366">9</text><text x="841" y="397">8</text><text x="853" y="397">8</text>
<text x="513" y="195">2</text><text x="513" y="237">1</text><text x="577" y="198">2</text><text x="577" y="235">1</text>
<text transform="translate(514 332) rotate(-90)">1</text><text transform="translate(514 409) rotate(-90)">1</text><text transform="translate(563 324) rotate(-90)">2</text><text transform="translate(563 409) rotate(-90)">2</text><text transform="translate(636 522) rotate(-90)">2</text><text transform="translate(673 522) rotate(-90)">1</text><text transform="translate(819 522) rotate(-90)">1</text><text transform="translate(855 522) rotate(-90)">2</text></g>
<g class="mnum"><text transform="translate(630 597) rotate(-90)">3</text><text transform="translate(661 597) rotate(-90)">2</text><text transform="translate(692 597) rotate(-90)">1</text><text transform="translate(794 597) rotate(-90)">3</text><text transform="translate(825 597) rotate(-90)">2</text><text transform="translate(856 597) rotate(-90)">1</text></g>
<g class="tiny"><text x="629" y="220">Net-(M1-D0)</text><text x="629" y="251">Net-(M1-D1)</text><text x="629" y="282">Net-(M1-D2)</text><text x="629" y="313">Net-(M1-D3)</text><text x="838" y="220">Net-(M1-5V)</text><text x="838" y="251">Net-(D1-K)</text></g>
<g class="micro"><text x="506" y="201">Net-(D1-A)</text><text x="506" y="243">Net-(D1-K)</text><text x="570" y="204">Net-(D1-A)</text><text x="570" y="240">Net-(M1-D0)</text><text transform="translate(522 335) rotate(-90)">Net-(D1-K)</text><text transform="translate(522 420) rotate(-90)">Net-(D1-K)</text><text transform="translate(571 335) rotate(-90)">Net-(M1-D3)</text><text transform="translate(571 420) rotate(-90)">Net-(M1-D3)</text><text transform="translate(638 606) rotate(-90)">Net-(D1-K)</text><text transform="translate(668 606) rotate(-90)">Net-(M1-5V)</text><text transform="translate(699 606) rotate(-90)">Net-(M1-D2)</text><text transform="translate(801 606) rotate(-90)">Net-(M2--)</text><text transform="translate(832 606) rotate(-90)">Net-(M1-5V)</text><text transform="translate(863 606) rotate(-90)">Net-(M1-D1)</text><text transform="translate(642 528) rotate(-90)">Net-(D1)</text><text transform="translate(679 528) rotate(-90)">Net-(M1)</text><text transform="translate(825 528) rotate(-90)">Net-(M2)</text><text transform="translate(861 528) rotate(-90)">Net-(D1)</text></g>
<g class="xs"><text x="644" y="344">x</text><text x="656" y="344">x</text><text x="644" y="375">x</text><text x="656" y="375">x</text><text x="644" y="406">x</text><text x="656" y="406">x</text><text x="841" y="282">x</text><text x="853" y="282">x</text><text x="841" y="313">x</text><text x="853" y="313">x</text><text x="841" y="344">x</text><text x="853" y="344">x</text><text x="841" y="375">x</text><text x="853" y="375">x</text><text x="841" y="406">x</text><text x="853" y="406">x</text>
<text x="731" y="200">17</text><text x="762" y="200">20</text><text x="731" y="231">18</text><text x="762" y="231">19</text><text x="734" y="208">x</text><text x="765" y="208">x</text><text x="734" y="239">x</text><text x="765" y="239">x</text><text transform="translate(734 417) rotate(-90)">16</text><text transform="translate(765 417) rotate(-90)">15</text><text transform="translate(742 415) rotate(-90)">x</text><text transform="translate(773 415) rotate(-90)">x</text></g>
<g class="net"><text x="719" y="501">Net-(D1-K)</text><text transform="translate(888 399) rotate(-90)">Net-(D1-K)</text><text transform="translate(905 398) rotate(-90)">Net-(M1-5V)</text><text transform="translate(519 349) rotate(-90)">Net-(D1-K)</text><text transform="translate(552 487) rotate(45)">Net-(D1-K)</text><text transform="translate(700 550) rotate(45)">Net-(M1-5V)</text></g>
<rect class="sel" x="479.500" y="172.500" width="456" height="505"/>
<path fill="#fff" d="M477 170h5v5h-5zM933 170h5v5h-5zM477 675h5v5h-5zM933 675h5v5h-5zM705 422h4v4h-4z"/><g fill="#fff"><circle cx="707" cy="172.500" r="2"/><circle cx="707" cy="677.500" r="2"/><circle cx="479.500" cy="424.500" r="2"/><circle cx="935.500" cy="424.500" r="2"/></g>
<path class="cross" d="M971 147.500h37M989.500 128v39"/>
</svg>
</section>

<div class="vbar right">
<div class="vg v2"><button class="on" aria-label="Select"><svg><use href="#i-arrow"/></svg></button><button aria-label="Local ratsnest"><svg><use href="#i-netx"/></svg></button></div><i></i>
<div class="vg v6"><button aria-label="Footprint"><svg><use href="#i-fp"/></svg></button><button aria-label="Route"><svg><use href="#i-route"/></svg></button><button aria-label="Tune"><svg><use href="#i-tune"/></svg></button><button aria-label="Via"><svg><use href="#i-viaadd"/></svg></button><button aria-label="Zone"><svg><use href="#i-zoneadd"/></svg></button><button aria-label="Rule area"><svg><use href="#i-rule"/></svg></button></div><i></i>
<div class="vg v13"><button aria-label="Line"><svg><use href="#i-line"/></svg></button><button aria-label="Arc"><svg><use href="#i-arc"/></svg></button><button aria-label="Rectangle"><svg><use href="#i-rect"/></svg></button><button aria-label="Circle"><svg><use href="#i-circ"/></svg></button><button aria-label="Polygon"><svg><use href="#i-poly"/></svg></button><button aria-label="Bezier"><svg><use href="#i-bez"/></svg></button><button aria-label="Image"><svg><use href="#i-img"/></svg></button><button aria-label="Text"><svg><use href="#i-text"/></svg></button><button aria-label="Text box"><svg><use href="#i-tbox"/></svg></button><button aria-label="Table"><svg><use href="#i-table"/></svg></button><button aria-label="Dimension"><svg><use href="#i-dima"/></svg></button><button aria-label="Barcode"><svg><use href="#i-bar"/></svg></button><button aria-label="Delete"><svg><use href="#i-del"/></svg></button></div><i></i>
<div class="vg v3"><button aria-label="Grid origin"><svg><use href="#i-gorig"/></svg></button><button aria-label="Snap"><svg><use href="#i-snap"/></svg></button><button aria-label="Measure"><svg><use href="#i-ruler"/></svg></button></div>
</div>

<aside class="appear">
<header class="phead"><h2>Appearance</h2></header>
<div class="tabs"><button class="cur">Layers</button><button>Objects</button><button>Nets</button></div>
<ul class="layers">
<li><i class="c-fcu"></i><svg><use href="#i-eye"/></svg>F.Cu</li>
<li><i class="c-bcu"></i><svg><use href="#i-eye"/></svg>B.Cu</li>
<li><i class="c-fad"></i><svg><use href="#i-eye"/></svg>F.Adhesive</li>
<li><i class="c-bad"></i><svg><use href="#i-eye"/></svg>B.Adhesive</li>
<li><i class="c-fpa"></i><svg><use href="#i-eye"/></svg>F.Paste</li>
<li><i class="c-bpa"></i><svg><use href="#i-eye"/></svg>B.Paste</li>
<li class="cur"><i class="c-fsi"></i><svg><use href="#i-eye"/></svg>F.Silkscreen</li>
<li><i class="c-bsi"></i><svg><use href="#i-eye"/></svg>B.Silkscreen</li>
<li><i class="c-fma"></i><svg><use href="#i-eye"/></svg>F.Mask</li>
<li><i class="c-bma"></i><svg><use href="#i-eye"/></svg>B.Mask</li>
<li><i class="c-gry"></i><svg><use href="#i-eye"/></svg>User.Drawings</li>
<li><i class="c-blu"></i><svg><use href="#i-eye"/></svg>User.Comments</li>
<li><i class="c-mnt"></i><svg><use href="#i-eye"/></svg>User.Eco1</li>
<li><i class="c-yel"></i><svg><use href="#i-eye"/></svg>User.Eco2</li>
<li><i class="c-edg"></i><svg><use href="#i-eye"/></svg>Edge.Cuts</li>
<li><i class="c-mag"></i><svg><use href="#i-eye"/></svg>Margin</li>
<li><i class="c-mag"></i><svg><use href="#i-eye"/></svg>F.Courtyard</li>
<li><i class="c-cya"></i><svg><use href="#i-eye"/></svg>B.Courtyard</li>
<li><i class="c-ffa"></i><svg><use href="#i-eye"/></svg>F.Fab</li>
<li><i class="c-bfa"></i><svg><use href="#i-eye"/></svg>B.Fab</li>
<li><i class="c-gry"></i><svg><use href="#i-eye"/></svg>User.1</li>
<li><i class="c-blu"></i><svg><use href="#i-eye"/></svg>User.2</li>
<li><i class="c-mnt"></i><svg><use href="#i-eye"/></svg>User.3</li>
<li><i class="c-yel"></i><svg><use href="#i-eye"/></svg>User.4</li>
</ul>
<div class="ldo"><button><svg viewBox="0 0 6 8"><path d="m1 1 4 3-4 3z"/></svg>Layer Display Options</button></div>
<div class="presets"><label for="ps">Presets (Ctrl+Tab):</label><div class="combo"><select id="ps"><option>---</option></select><svg><use href="#i-down"/></svg></div>
<label for="vp">Viewports (Shift+Tab):</label><div class="combo"><select id="vp"><option>---</option></select><svg><use href="#i-down"/></svg></div></div>
<h2 class="sfh">Selection Filter</h2>
<div class="filter">
<label><input type="checkbox" checked>All items</label><label><input type="checkbox">Locked items</label>
<label><input type="checkbox" checked>Footprints</label><label><input type="checkbox" checked>Text</label>
<label><input type="checkbox" checked>Tracks</label><label><input type="checkbox" checked>Vias</label>
<label><input type="checkbox" checked>Pads</label><label><input type="checkbox" checked>Graphics</label>
<label><input type="checkbox" checked>Zones</label><label><input type="checkbox" checked>Rule Areas</label>
<label><input type="checkbox" checked>Dimensions</label><label><input type="checkbox" checked>Other items</label>
<label><input type="checkbox" checked>Points</label>
</div>
</aside>
</main>

<dl class="info">
<div><dt>Type</dt><dd>Drawing</dd></div><div><dt>Shape</dt><dd>Rectangle</dd></div><div><dt>Width</dt><dd>37.5000 mm</dd></div><div><dt>Height</dt><dd>41.5000 mm</dd></div><div><dt>Line Style</dt><dd>Default</dd></div><div><dt>Line Width</dt><dd>0.0500 mm</dd></div><div><dt>Layer</dt><dd>Edge.Cuts</dd></div>
</dl>
<footer class="status"><span>File 'D:\OneDrive\Graduate School\0304 HTMAA...Motor\20261013_XIAO_Motor.kicad_pcb' saved.</span><span>Z 7.32</span><span>X 166.0000&nbsp; Y 67.0000</span><span>dx 166.0000&nbsp; dy 67.0000&nbsp; dist 179.0112</span><span>grid 0.5000</span><span>mm</span><span>Select item(s)</span></footer>
</div>
</body>
</html>
```
FILE: styles.css
```css
* { box-sizing: border-box; }
html, body { height: 100%; margin: 0; }
body { background: #2f2f2f; color: #f0f0f0; font: 9px/14px "Open Sans", "Noto Sans", sans-serif; overflow: hidden; }
button, select, input { font: inherit; color: inherit; margin: 0; }
button { background: none; border: 0; padding: 0; }
h1, h2, p, dl, dd, ul { margin: 0; padding: 0; font-size: inherit; font-weight: 400; }
.defs { position: absolute; width: 0; height: 0; }
.app { display: flex; flex-direction: column; height: 100vh; }

.titlebar { display: flex; align-items: center; height: 19px; padding-left: 1px; background: #202020; color: #959595; }
.logo { width: 14px; height: 14px; margin-right: 3px; }
.winctl { display: flex; gap: 28px; margin-left: auto; padding-right: 14px; }
.winctl svg { display: block; width: 9px; height: 9px; fill: none; stroke: #888; }
.menubar { display: flex; gap: 12px; height: 16px; padding-left: 6px; background: #2b2b2b; color: #7c7c7c; }

.toolbar { display: flex; align-items: center; height: 25px; padding: 0 0 2px 3px; background: #323232; }
.toolbar.second { height: 23px; padding: 0 0 0 4px; border-bottom: 1px solid #1c1c1c; }
.tg { display: flex; flex: none; }
.tg button { flex: 1; display: flex; justify-content: center; }
.tg svg, .solo svg { width: 22px; height: 22px; }
.n1 { width: 27px; } .n2 { width: 54px; } .n3 { width: 80px; } .n6 { width: 159px; } .n8 { width: 213px; } .undo { width: 56px; }
.sep { flex: none; width: 1px; height: 14px; margin: 0 3px 0 2px; background: #555; }
.solo { flex: none; width: 28px; display: flex; justify-content: center; }
.combo { display: grid; flex: none; align-items: center; height: 18px; border: 1px solid #6a6a6a; background: #2d2d2d; }
.combo select { grid-area: 1 / 1; width: 100%; height: 16px; line-height: 14px; padding: 0 14px 0 1px; border: 0; background: none; appearance: none; }
.combo > svg { grid-area: 1 / 1; justify-self: end; width: 10px; height: 10px; margin-right: 2px; pointer-events: none; }
.w-default { width: 70px; }
.w-track { width: 126px; }
.w-via { width: 120px; margin-right: 9px; }
.w-layer { width: 98px; }
.w-layer select { padding: 0 0 0 20px; background: #151515; width: 83px; }
.w-grid { width: 135px; }
.w-zoom { width: 75px; }
.sw { width: 12px; height: 12px; }
.w-layer .sw { grid-area: 1 / 1; z-index: 1; margin-left: 4px; background: #f2eda1; }
input[type=checkbox] { display: flex; align-items: center; justify-content: center; appearance: none; flex: none; width: 10px; height: 10px; border: 1px solid #8c8c8c; border-radius: 2px; background: #1d1d1d; }
input[type=checkbox]:checked { border-color: #55c3f5; background: #55c3f5; }
input[type=checkbox]:checked::before { content: ""; width: 5px; height: 3px; border: solid #12384c; border-width: 0 0 1px 1px; transform: rotate(-45deg); }
.check { display: flex; align-items: center; gap: 2px; margin-left: 3px; }

.main { display: grid; grid-template-columns: 209px 28px minmax(0, 1fr) 27px 161px; flex: 1; min-height: 0; }
.props { background: #1a1a1a; border-right: 1px solid #2a2a2a; }
.phead { display: flex; align-items: center; justify-content: space-between; height: 18px; padding: 0 3px 2px; background: #2e2e2e; }
.phead svg { display: block; width: 9px; height: 9px; fill: none; stroke: #fff; stroke-width: 1.3; }
.ptype { height: 18px; padding: 2px 3px; background: #1d1d1d; }
.ptable { width: 100%; border-collapse: collapse; table-layout: fixed; text-align: left; }
.k0 { width: 15px; }
.k1 { width: 91px; }
.ptable td, .ptable th { height: 19px; padding: 0 2px; font-weight: 400; border-bottom: 1px solid #262626; }
.ptable td:first-child { background: #303030; border-color: #303030; }
.ptable th { padding-left: 1px; border-right: 1px solid #2b2b2b; }
.ptable input { margin-left: 2px; }
.ptable .sect th { background: #303030; border-color: #303030; font-weight: 700; }
.ptable .sect svg { display: block; width: 10px; height: 10px; fill: none; stroke: #fff; stroke-width: 1.2; }
.ptable .dim { color: #606060; }
.lay { display: flex; align-items: center; gap: 4px; }
.sw.edge { width: 9px; height: 17px; background: #cfd2cb; }

.vbar { display: flex; flex-direction: column; align-items: center; padding-top: 3px; background: #303030; }
.vbar.left { padding-left: 3px; }
.vbar.right { padding-right: 3px; }
.vbar > i { flex: none; width: 16px; height: 2px; margin: 2px 0; background: #555; }
.vg { display: flex; flex: none; flex-direction: column; }
.vg button { flex: 1; display: flex; align-items: center; justify-content: center; width: 24px; min-height: 0; }
.vg svg { width: 22px; height: 22px; }
.vg .on svg { background: #0b2f57; outline: 1px solid #0d5ca6; }
.v1 { height: 27px; } .v2 { height: 53px; } .v3 { height: 80px; } .v5 { height: 135px; } .v6 { height: 159px; } .v13 { height: 346px; }

.canvas { position: relative; overflow: hidden; background: #001023; }
.canvas > svg { display: block; width: 100%; height: 100%; }
.canvas text { font-family: "DejaVu Sans Mono", monospace; white-space: pre; }
.bg { fill: #001023; }
.board { fill: #222c39; }
.zone { fill: #c83434; opacity: .6; }
.cu { fill: none; stroke: #c83434; stroke-linejoin: round; stroke-linecap: round; }
.pad { fill: #d0353a; }
.fab { fill: #a9adb1; }
.fab .soft { opacity: .6; }
.fabl { fill: none; stroke: #b5b8ba; }
.hb { fill: url(#hatch2); stroke: #6b3340; stroke-width: 1; }
.court { fill: none; stroke: #a321a8; stroke-width: 1; }
.silk { fill: none; stroke: #f2eda1; stroke-width: 1.5; }
.silkt { fill: #f2eda1; }
.t18 { font-size: 18px; } .t16 { font-size: 16px; } .t12 { font-size: 12px; }
.sb { font-size: 9px; font-weight: 700; }
.num { font-size: 9px; fill: #f2d5d5; }
.mnum { font-size: 12px; fill: #f2d5d5; }
.tiny { font-size: 5px; fill: #f2d5d5; }
.micro { font-size: 4px; fill: #eec0c0; }
.xs { font-size: 7px; fill: #f2d5d5; }
.net { font-size: 9px; fill: #f5dede; }
.sel { fill: none; stroke: #aeb4ba; }
.cross { fill: none; stroke: #5d6670; }

.appear { display: flex; flex-direction: column; background: #1c1c1c; border-left: 1px solid #1c1c1c; }
.appear .phead { height: 20px; padding: 0 1px 3px; }
.tabs { display: flex; height: 17px; border-bottom: 1px solid #3a3a3a; background: #2c2c2c; }
.tabs button { padding: 0 3px; background: #000; border: solid #3a3a3a; border-width: 1px 1px 0 0; line-height: 15px; }
.tabs .cur { padding-right: 5px; background: #2e2e2e; }
.tabs button:last-child { padding-right: 13px; }
.layers { display: grid; flex: none; grid-template-rows: repeat(24, minmax(0, 1fr)); height: 379px; list-style: none; background: #2e2e2e; }
.layers li { display: flex; align-items: center; padding-left: 12px; }
.layers li i { width: 12px; height: 11px; margin-right: 3px; }
.layers svg { width: 14px; height: 12px; margin-right: 2px; }
.layers .cur { position: relative; background: #3a3a3a; }
.layers .cur::before { content: ""; position: absolute; left: 5px; border: 4px solid transparent; border-left-color: #4a4af0; }
.c-fcu { background: #c83434; } .c-bcu { background: #4d7fc4; } .c-fad { background: #840084; } .c-bad { background: #000084; }
.c-fpa { background: #a49590; } .c-bpa { background: #00b0b0; } .c-fsi { background: #f2eda1; } .c-bsi { background: #e8b2a7; }
.c-fma { background: repeating-conic-gradient(#552a66 0 25%, #6d3a7d 0 50%) 0 0 / 8px 8px; }
.c-bma { background: repeating-conic-gradient(#0a6a60 0 25%, #168074 0 50%) 0 0 / 8px 8px; }
.c-gry { background: #c2c2c2; } .c-blu { background: #5994dc; } .c-mnt { background: #b4dbd2; } .c-yel { background: #d8c852; }
.c-edg { background: #d0d2cd; } .c-mag { background: #ff26e2; } .c-cya { background: #26e9ff; } .c-ffa { background: #afafaf; } .c-bfa { background: #585d84; }
.ldo { flex: 1; min-height: 0; padding: 0 8px 4px; background: linear-gradient(#1a1a1a, #1a1a1a) bottom / 100% 19px no-repeat #2e2e2e; display: flex; align-items: flex-end; color: #747474; }
.ldo svg { width: 6px; height: 8px; margin-right: 1px; fill: #777; }
.presets { padding: 4px 2px; background: #1a1a1a; }
.presets label { display: block; line-height: 13px; }
.presets .combo { margin: 0 0 1px; }
.sfh { height: 20px; padding: 3px 1px; background: #2b2b2b; }
.filter { display: grid; grid-template-columns: 69px 1fr; grid-auto-rows: 14px; padding: 0 0 2px 1px; }
.filter label { display: flex; align-items: center; gap: 2px; white-space: nowrap; }

.info { display: grid; grid-template-columns: 61px 69px 78px 79px 66px 73px 1fr; height: 26px; padding: 0 0 0 10px; background: #303030; color: #737373; line-height: 12px; }
.status { display: grid; grid-template-columns: 427px 53px 132px 215px 128px 41px 1fr; align-items: center; height: 16px; padding-left: 1px; background: #000; white-space: nowrap; }
```
